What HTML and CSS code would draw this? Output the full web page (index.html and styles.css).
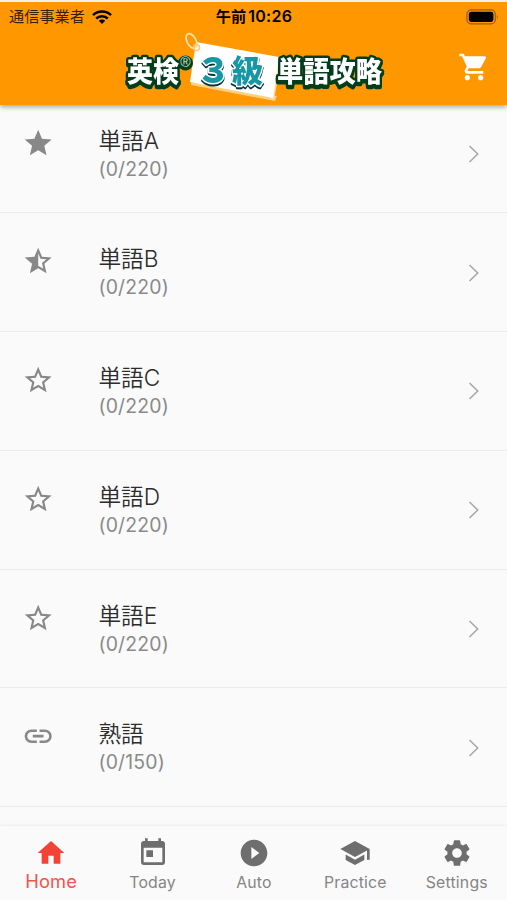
FILE: index.html
```
<!DOCTYPE html>
<html lang="ja">
<head>
  <meta charset="UTF-8" />
  <meta name="viewport" content="width=device-width, initial-scale=1.0"/>
  <title>英検3級 単語攻略</title>
  <link rel="stylesheet" href="styles.css">
</head>
<body>
  <svg class="symbols" xmlns="http://www.w3.org/2000/svg">
    <symbol id="star" viewBox="0 0 24 24"><path d="M12 17.27L18.18 21l-1.64-7.03L22 9.24l-7.19-.61L12 2 9.19 8.63 2 9.24l5.46 4.73L5.82 21z"/></symbol>
    <symbol id="star-half" viewBox="0 0 24 24"><path d="M22 9.24l-7.19-.62L12 2 9.19 8.63 2 9.24l5.46 4.73L5.82 21 12 17.27 18.18 21l-1.63-7.03L22 9.24zM12 15.4V6.1l1.71 4.04 4.38.38-3.32 2.88 1 4.28L12 15.4z"/></symbol>
    <symbol id="star-border" viewBox="0 0 24 24"><path d="M22 9.24l-7.19-.62L12 2 9.19 8.63 2 9.24l5.46 4.73L5.82 21 12 17.27 18.18 21l-1.63-7.03L22 9.24zM12 15.4l-3.76 2.27 1-4.28-3.32-2.88 4.38-.38L12 6.1l1.71 4.04 4.38.38-3.32 2.88 1 4.28L12 15.4z"/></symbol>
    <symbol id="link" viewBox="0 0 24 24"><path d="M3.9 12c0-1.71 1.39-3.1 3.1-3.1h4V7H7c-2.76 0-5 2.24-5 5s2.24 5 5 5h4v-1.9H7c-1.71 0-3.1-1.39-3.1-3.1zM8 13h8v-2H8v2zm9-6h-4v1.9h4c1.71 0 3.1 1.39 3.1 3.1s-1.39 3.1-3.1 3.1h-4V17h4c2.76 0 5-2.24 5-5s-2.24-5-5-5z"/></symbol>
    <symbol id="chevron" viewBox="0 0 12 18"><path d="M1.5 1L9.7 9 1.5 17" fill="none" stroke="currentColor" stroke-width="1.6"/></symbol>
  </svg>

  <header class="app-bar">
    <div class="status">
      <div class="carrier">
        <span>通信事業者</span>
        <svg class="wifi" viewBox="0 0 20 14">
          <path d="M1 5.2a13 13 0 0 1 18 0M4.2 8.5a8.4 8.4 0 0 1 11.6 0" fill="none" stroke="#000" stroke-width="2.5"/>
          <path d="M10 14l-3.2-3.2a4.6 4.6 0 0 1 6.4 0z"/>
        </svg>
      </div>
      <div class="time">午前<span>10:26</span></div>
      <svg class="battery" viewBox="0 0 33 16">
        <rect x=".9" y=".9" width="28.4" height="14" rx="4.2" fill="none" stroke="#000" stroke-opacity=".4" stroke-width="1.2"/>
        <rect x="2.8" y="2.8" width="24.6" height="10.2" rx="2.4"/>
        <path d="M30.8 5.5q1.8 2.4 0 4.8z" fill-opacity=".45"/>
      </svg>
    </div>
    <div class="title-bar">
      <svg class="logo" viewBox="0 0 262 72">
        <path d="M68 48l86 16-2 5-84-16z" fill="#ffcf80"/>
        <path d="M154 27l4 1-7 40-4-1z" fill="#ffdca6"/>
        <path d="M73 10l83 15-6 41-83-16z" fill="#fff"/>
        <ellipse cx="68.5" cy="9" rx="4.5" ry="8" transform="rotate(-28 68.5 9)" fill="none" stroke="#ffe3b0" stroke-width="1.7"/>
        <circle cx="73.5" cy="15.5" r="3" fill="none" stroke="#ffc774" stroke-width="1.5"/>
        <circle cx="62.5" cy="31" r="7.5" fill="#023d1c"/>
        <g class="logo-text">
          <text x="4" y="49.5" font-size="28" textLength="52" lengthAdjust="spacingAndGlyphs">英検</text>
          <text x="154" y="50" font-size="28" textLength="105" lengthAdjust="spacingAndGlyphs">単語攻略</text>
        </g>
        <text class="reg" x="62.5" y="35">®</text>
        <g class="level">
          <text x="73" y="50.5" font-size="35">３</text>
          <text x="109" y="49.5" font-size="31">級</text>
        </g>
      </svg>
      <svg class="cart" viewBox="0 0 24 24"><path d="M7 18c-1.1 0-1.99.9-1.99 2S5.9 22 7 22s2-.9 2-2-.9-2-2-2zM1 2v2h2l3.6 7.59-1.35 2.45c-.16.28-.25.61-.25.96 0 1.1.9 2 2 2h12v-2H7.42c-.14 0-.25-.11-.25-.25l.03-.12.9-1.63h7.45c.75 0 1.41-.41 1.75-1.03l3.58-6.49A1 1 0 0 0 20 4H5.21l-.94-2H1zm16 16c-1.1 0-1.99.9-1.99 2s.89 2 1.99 2 2-.9 2-2-.9-2-2-2z"/></svg>
    </div>
  </header>

  <main class="list">
    <div class="row">
      <svg class="icon"><use href="#star"/></svg>
      <div class="label"><div class="name">単語A</div><div class="count">(0/220)</div></div>
      <svg class="chevron"><use href="#chevron"/></svg>
    </div>
    <div class="row">
      <svg class="icon"><use href="#star-half"/></svg>
      <div class="label"><div class="name">単語B</div><div class="count">(0/220)</div></div>
      <svg class="chevron"><use href="#chevron"/></svg>
    </div>
    <div class="row">
      <svg class="icon"><use href="#star-border"/></svg>
      <div class="label"><div class="name">単語C</div><div class="count">(0/220)</div></div>
      <svg class="chevron"><use href="#chevron"/></svg>
    </div>
    <div class="row">
      <svg class="icon"><use href="#star-border"/></svg>
      <div class="label"><div class="name">単語D</div><div class="count">(0/220)</div></div>
      <svg class="chevron"><use href="#chevron"/></svg>
    </div>
    <div class="row">
      <svg class="icon"><use href="#star-border"/></svg>
      <div class="label"><div class="name">単語E</div><div class="count">(0/220)</div></div>
      <svg class="chevron"><use href="#chevron"/></svg>
    </div>
    <div class="row">
      <svg class="icon"><use href="#link"/></svg>
      <div class="label"><div class="name">熟語</div><div class="count">(0/150)</div></div>
      <svg class="chevron"><use href="#chevron"/></svg>
    </div>
  </main>

  <nav class="bottom-nav">
    <div class="tab active">
      <svg viewBox="0 0 24 24"><path d="M10 20v-6h4v6h5v-8h3L12 3 2 12h3v8z"/></svg>
      <span>Home</span>
    </div>
    <div class="tab">
      <svg viewBox="0 0 24 24"><path d="M19 3h-1V1h-2v2H8V1H6v2H5c-1.11 0-1.99.9-1.99 2L3 19c0 1.1.89 2 2 2h14c1.1 0 2-.9 2-2V5c0-1.1-.9-2-2-2zm0 16H5V8h14v11zM7 10h5v5H7z"/></svg>
      <span>Today</span>
    </div>
    <div class="tab">
      <svg viewBox="0 0 24 24"><path d="M12 2C6.48 2 2 6.48 2 12s4.48 10 10 10 10-4.48 10-10S17.52 2 12 2zm-2 14.5v-9l6 4.5-6 4.5z"/></svg>
      <span>Auto</span>
    </div>
    <div class="tab">
      <svg viewBox="0 0 24 24"><path d="M5 13.18v4L12 21l7-3.82v-4L12 17l-7-3.82zM12 3L1 9l11 6 9-4.91V17h2V9L12 3z"/></svg>
      <span>Practice</span>
    </div>
    <div class="tab">
      <svg viewBox="0 0 24 24"><path d="M19.14 12.94c.04-.3.06-.61.06-.94 0-.32-.02-.64-.07-.94l2.03-1.58c.18-.14.23-.41.12-.61l-1.92-3.32c-.12-.22-.37-.29-.59-.22l-2.39.96c-.5-.38-1.03-.7-1.62-.94l-.36-2.54c-.04-.24-.24-.41-.48-.41h-3.84c-.24 0-.43.17-.47.41l-.36 2.54c-.59.24-1.13.57-1.62.94l-2.39-.96c-.22-.08-.47 0-.59.22L2.74 8.87c-.12.21-.08.47.12.61l2.03 1.58c-.05.3-.09.63-.09.94s.02.64.07.94l-2.03 1.58c-.18.14-.23.41-.12.61l1.92 3.32c.12.22.37.29.59.22l2.39-.96c.5.38 1.03.7 1.62.94l.36 2.54c.05.24.24.41.48.41h3.84c.24 0 .44-.17.47-.41l.36-2.54c.59-.24 1.13-.56 1.62-.94l2.39.96c.22.08.47 0 .59-.22l1.92-3.32c.12-.22.07-.47-.12-.61l-2.01-1.58zM12 15.6c-1.98 0-3.6-1.62-3.6-3.6s1.62-3.6 3.6-3.6 3.6 1.62 3.6 3.6-1.62 3.6-3.6 3.6z"/></svg>
      <span>Settings</span>
    </div>
  </nav>
</body>
</html>
```
FILE: styles.css
```
* {
  box-sizing: border-box;
}

body {
  margin: 0;
  height: 900px;
  display: flex;
  flex-direction: column;
  overflow: hidden;
  background: #fafafa;
  font-family: Inter, "Noto Sans CJK JP", sans-serif;
}

svg {
  display: block;
  flex: none;
}

.symbols {
  position: absolute;
  width: 0;
  height: 0;
}

/* Header */
.app-bar {
  position: relative;
  z-index: 1;
  flex: none;
  height: 105px;
  border-top: 2px solid #f3efe9;
  background: #ff9800;
  box-shadow: 0 2px 5px rgba(0, 0, 0, 0.35);
}

.status {
  display: grid;
  grid-template-columns: 1fr auto 1fr;
  align-items: center;
  height: 28px;
  padding: 0 8px 0 9px;
  font-size: 15.2px;
  line-height: 28px;
}

.carrier {
  display: flex;
  align-items: center;
  gap: 7px;
  color: rgba(0, 0, 0, 0.8);
}

.wifi {
  width: 20px;
  height: 14px;
}

.time {
  font-weight: 600;
}

.time span {
  margin-left: 2px;
  font-size: 16px;
  letter-spacing: 0.3px;
}

.battery {
  width: 33px;
  height: 16px;
  justify-self: end;
}

.title-bar {
  display: flex;
  justify-content: space-between;
  padding: 2px 17px 0 123px;
}

.logo {
  width: 262px;
  height: 72px;
  overflow: visible;
  font-family: "Noto Sans CJK JP", sans-serif;
  font-weight: 900;
}

.logo text {
  stroke-linejoin: round;
  paint-order: stroke;
}

.logo-text {
  fill: #fff;
  stroke: #023d1c;
  stroke-width: 5;
  filter: drop-shadow(0 2.5px 0 #023d1c);
}

.logo .reg {
  fill: #d5e5d8;
  font-family: "Liberation Sans", sans-serif;
  font-size: 14px;
  font-weight: 400;
  text-anchor: middle;
}

.level {
  fill: #1597a5;
  stroke: #fff;
  stroke-width: 3;
  filter: drop-shadow(0 2.5px 0 #06333b);
}

.cart {
  width: 32px;
  height: 32px;
  margin-top: 19px;
  fill: #fff;
}

/* Word lists */
.list {
  flex: 1;
  min-height: 0;
  margin-top: -10.5px;
  overflow: hidden;
}

.row {
  display: flex;
  height: 118.8px;
  padding: 32px 27px 0 22px;
  border-bottom: 1.5px solid #ebebeb;
}

.icon {
  width: 32.4px;
  height: 32.4px;
  fill: #888;
}

.label {
  flex: 1;
  margin: -1px 0 0 44px;
}

.name {
  color: #2c2c2c;
  font-size: 22.7px;
  font-weight: 350;
  line-height: 29px;
}

.count {
  color: #8a8a8a;
  font-size: 19.4px;
  line-height: 28px;
  letter-spacing: 0.2px;
}

.chevron {
  width: 12px;
  height: 18px;
  margin-top: 18.3px;
  color: #a8a8a8;
}

/* Tabs */
.bottom-nav {
  position: relative;
  flex: none;
  display: grid;
  grid-template-columns: repeat(5, 1fr);
  height: 74px;
  background: #fafafa;
  box-shadow: 0 -1px 3px rgba(0, 0, 0, 0.06);
}

.tab {
  display: flex;
  flex-direction: column;
  align-items: center;
  padding: 11px 0 0 1px;
  color: #858585;
  font-size: 15.8px;
  line-height: 24px;
  letter-spacing: 0.2px;
}

.tab svg {
  width: 32px;
  height: 32px;
  fill: #6e6e6e;
}

.tab span {
  margin-top: 2px;
}

.active {
  color: #f0554b;
  font-size: 18.3px;
}

.active svg {
  fill: #f44336;
}

.active span {
  margin-top: 0;
}
```
